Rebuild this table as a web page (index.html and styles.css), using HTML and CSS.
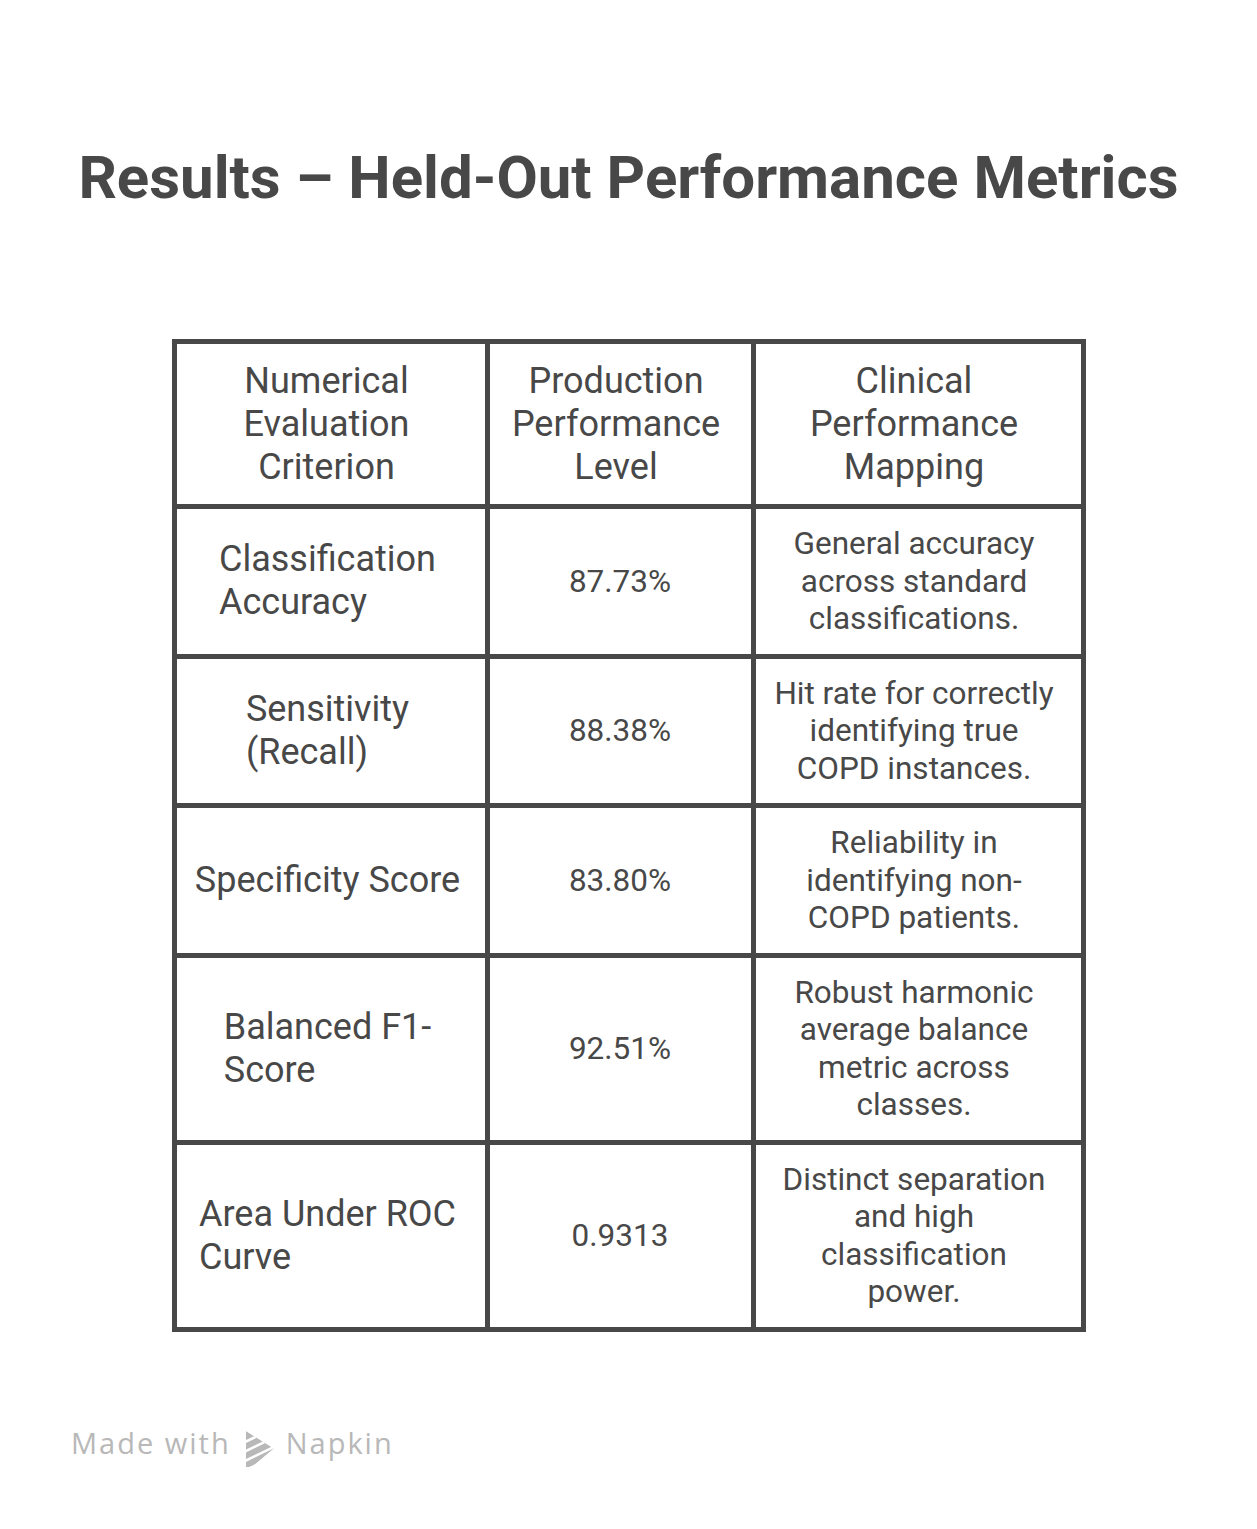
FILE: index.html
```html
<!DOCTYPE html>
<html lang="en">
<head>
<meta charset="utf-8">
<title>Results – Held-Out Performance Metrics</title>
<link rel="stylesheet" href="styles.css">
</head>
<body>
<main class="page">
  <h1 class="title">Results – Held-Out Performance Metrics</h1>
  <div class="grid">
    <div class="cell head">Numerical<br>Evaluation<br>Criterion</div>
    <div class="cell head">Production<br>Performance<br>Level</div>
    <div class="cell head">Clinical<br>Performance<br>Mapping</div>

    <div class="cell label"><span class="lead">Classification<br>Accuracy</span></div>
    <div class="cell value">87.73%</div>
    <div class="cell desc">General accuracy<br>across standard<br>classifications.</div>

    <div class="cell label"><span class="lead">Sensitivity<br>(Recall)</span></div>
    <div class="cell value">88.38%</div>
    <div class="cell desc">Hit rate for correctly<br>identifying true<br>COPD instances.</div>

    <div class="cell label"><span class="lead">Specificity Score</span></div>
    <div class="cell value">83.80%</div>
    <div class="cell desc">Reliability in<br>identifying non-<br>COPD patients.</div>

    <div class="cell label"><span class="lead">Balanced F1-<br>Score</span></div>
    <div class="cell value">92.51%</div>
    <div class="cell desc">Robust harmonic<br>average balance<br>metric across<br>classes.</div>

    <div class="cell label"><span class="lead">Area Under ROC<br>Curve</span></div>
    <div class="cell value">0.9313</div>
    <div class="cell desc">Distinct separation<br>and high<br>classification<br>power.</div>
  </div>
  <footer class="credit">
    <span class="credit-text">Made with</span>
    <svg class="logo" viewBox="0 0 28 36" width="28" height="36" aria-hidden="true">
      <defs>
        <clipPath id="tri">
          <polygon points="0,0 28,17.5 6,36 0,36"/>
        </clipPath>
      </defs>
      <g clip-path="url(#tri)">
        <polygon points="0,0 28,17.5 6,36 0,36" fill="#b8b8b8"/>
        <g stroke="#ffffff" stroke-width="2.6">
          <line x1="-2" y1="11.5" x2="30" y2="-4"/>
          <line x1="-2" y1="21" x2="34" y2="3.5"/>
          <line x1="-2" y1="30.5" x2="38" y2="11"/>
          <line x1="-2" y1="40" x2="40" y2="19.5"/>
        </g>
      </g>
    </svg>
    <span class="credit-text brand">Napkin</span>
  </footer>
</main>
</body>
</html>
```

FILE: styles.css
```css
html, body {
  margin: 0;
  padding: 0;
  background: #ffffff;
}

body {
  font-family: Roboto, "Liberation Sans", Arial, sans-serif;
  color: #484848;
}

.page {
  width: 1257px;
  min-height: 1529px;
  padding-top: 142px;
  box-sizing: border-box;
}

.title {
  margin: 0;
  font-size: 60px;
  line-height: 72px;
  font-weight: 700;
  text-align: center;
  color: #484848;
  white-space: nowrap;
}

.grid {
  width: 914px;
  margin: 125px auto 0;
  box-sizing: border-box;
  display: grid;
  grid-template-columns: 308px 261px 325px;
  gap: 5px;
  padding: 5px;
  background: #484848;
}

.cell {
  background: #ffffff;
  display: flex;
  align-items: center;
  justify-content: center;
  text-align: center;
  padding: 16px 8px;
  white-space: nowrap;
}

.head {
  font-size: 36px;
  line-height: 43px;
  padding: 15.5px 12px 15.5px 4px;
}

.label {
  font-size: 36px;
  line-height: 43px;
  padding-left: 5px;
  padding-right: 11px;
}

.lead {
  display: inline-block;
  text-align: left;
}

.value {
  font-size: 31.5px;
  line-height: 37.5px;
}

.desc {
  font-size: 31.5px;
  line-height: 37.5px;
  padding-left: 4px;
  padding-right: 12px;
}

.credit {
  margin-top: 93px;
  padding-left: 71px;
  display: flex;
  align-items: flex-start;
  height: 36px;
}

.credit-text {
  font-family: "Open Sans", Roboto, sans-serif;
  font-size: 29px;
  line-height: 36px;
  letter-spacing: 2px;
  color: #b8b8b8;
}

.logo {
  display: block;
  margin-top: 6px;
  margin-left: 15px;
}

.brand {
  margin-left: 12px;
}
```
